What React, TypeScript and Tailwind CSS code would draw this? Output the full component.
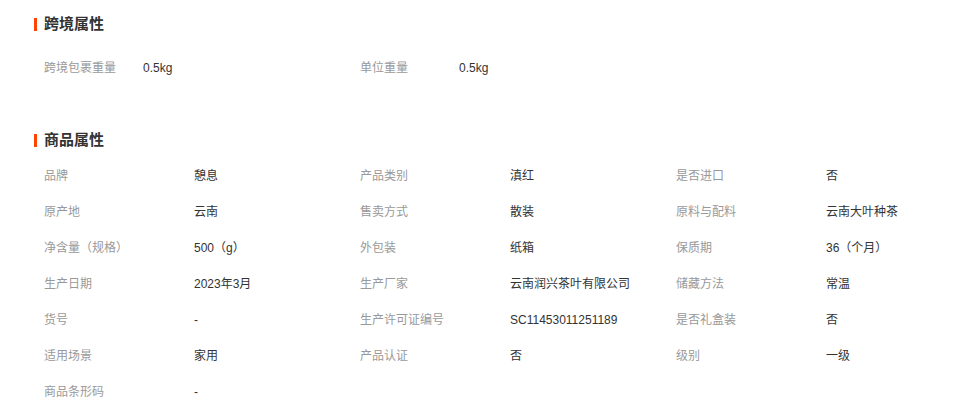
type Attr = { label: string; value: string };

const crossBorder: Attr[] = [
  { label: '跨境包裹重量', value: '0.5kg' },
  { label: '单位重量', value: '0.5kg' },
];

const productAttrs: Attr[] = [
  { label: '品牌', value: '憩息' },
  { label: '产品类别', value: '滇红' },
  { label: '是否进口', value: '否' },
  { label: '原产地', value: '云南' },
  { label: '售卖方式', value: '散装' },
  { label: '原料与配料', value: '云南大叶种茶' },
  { label: '净含量（规格）', value: '500（g）' },
  { label: '外包装', value: '纸箱' },
  { label: '保质期', value: '36（个月）' },
  { label: '生产日期', value: '2023年3月' },
  { label: '生产厂家', value: '云南润兴茶叶有限公司' },
  { label: '储藏方法', value: '常温' },
  { label: '货号', value: '-' },
  { label: '生产许可证编号', value: 'SC11453011251189' },
  { label: '是否礼盒装', value: '否' },
  { label: '适用场景', value: '家用' },
  { label: '产品认证', value: '否' },
  { label: '级别', value: '一级' },
  { label: '商品条形码', value: '-' },
];

const SectionTitle = ({ title }: { title: string }) => (
  <div className="flex items-center h-[36px]">
    <span className="w-[3px] h-[13px] bg-[#ff4400]" />
    <span className="ml-[7px] text-[15px] font-bold text-[#333]">{title}</span>
  </div>
);

const AttrGrid = ({ items, labelWidth }: { items: Attr[]; labelWidth: string }) => (
  <div className="grid grid-cols-[316px_316px_316px] pl-[10px]">
    {items.map((item) => (
      <div key={item.label} className="flex items-center h-[36px] text-[12px]">
        <span className={`${labelWidth} shrink-0 text-[#999]`}>{item.label}</span>
        <span className="text-[#333]">{item.value}</span>
      </div>
    ))}
  </div>
);

export default function App() {
  return (
    <div
      className="w-[960px] h-[412px] overflow-hidden bg-white pl-[34px] pt-[6px]"
      style={{ fontFamily: '"Liberation Sans", "Noto Sans CJK SC", sans-serif' }}
    >
      <SectionTitle title="跨境属性" />
      <div className="mt-[8px]">
        <AttrGrid items={crossBorder} labelWidth="w-[99px]" />
      </div>
      <div className="mt-[36px]">
        <SectionTitle title="商品属性" />
        <AttrGrid items={productAttrs} labelWidth="w-[150px]" />
      </div>
    </div>
  );
}
